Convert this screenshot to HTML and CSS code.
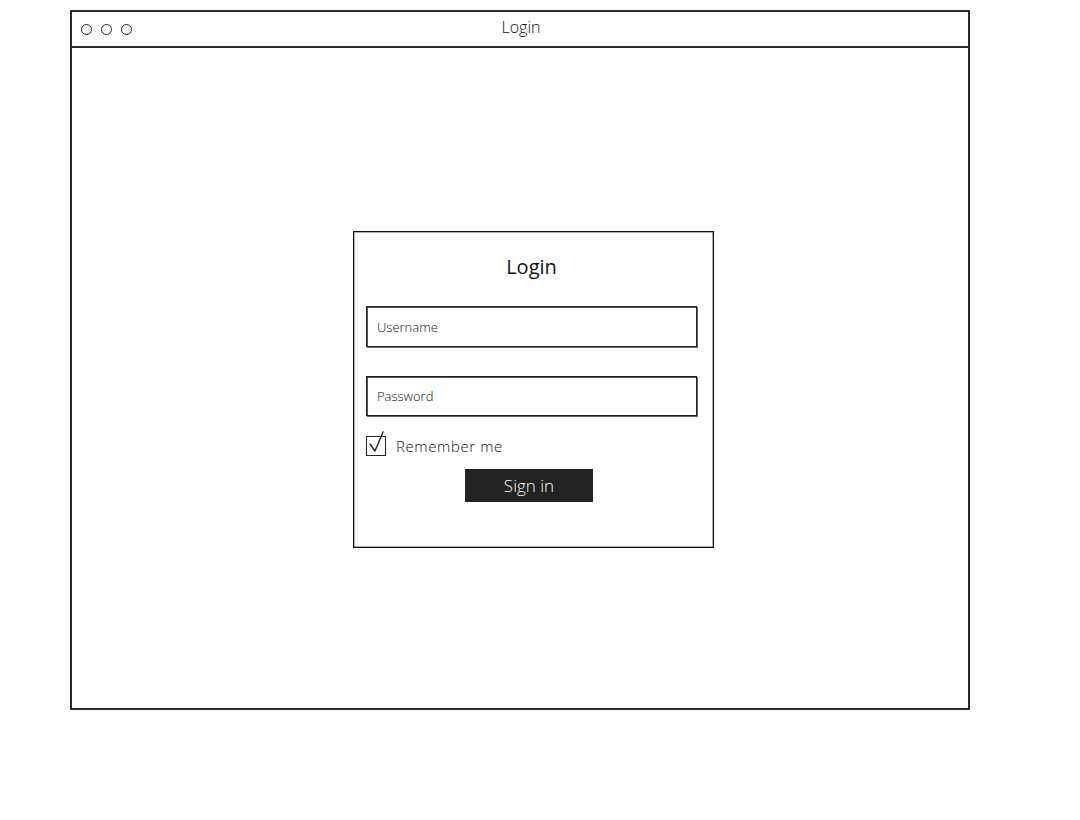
FILE: index.html
```html
<!DOCTYPE html>
<html>
<head>
<meta charset="utf-8">
<link rel="stylesheet" href="styles.css">
</head>
<body>
<div class="window">
  <div class="titlebar">
    <div class="dots"><span class="dot"></span><span class="dot"></span><span class="dot"></span></div>
    <div class="wtitle">Login</div>
  </div>
  <div class="content">
    <div class="card">
      <div class="ctitle">Login</div>
      <div class="field f1">Username</div>
      <div class="field f2">Password</div>
      <div class="remember">
        <span class="check"><svg width="22" height="24" viewBox="0 0 22 24"><path d="M4 13 L9 20 L17 1" fill="none" stroke="#222" stroke-width="1.4" stroke-linecap="round" stroke-linejoin="round"/></svg></span>
        <span class="rlabel">Remember me</span>
      </div>
      <div class="btn">Sign in</div>
    </div>
  </div>
</div>
</body>
</html>
```
FILE: styles.css
```css
html, body { margin: 0; padding: 0; background: #fff; }
body {
  padding: 10px 0 0 70px;
  font-family: "Open Sans", "Noto Sans", sans-serif;
  color: #111;
}
.window {
  width: 900px;
  height: 700px;
  box-sizing: border-box;
  border: 2px solid #2a2a2a;
  display: flex;
  flex-direction: column;
}
.titlebar {
  height: 36px;
  box-sizing: border-box;
  border-bottom: 2px solid #2a2a2a;
  display: flex;
  align-items: center;
  position: relative;
}
.dots { display: flex; gap: 9px; padding-left: 9px; }
.dot {
  width: 9px; height: 9px;
  border: 1.4px solid #222;
  border-radius: 50%;
}
.wtitle {
  position: absolute;
  left: 0; right: 0;
  top: 4px;
  text-align: center;
  font-size: 16px;
  line-height: 22px;
  font-weight: 300;
  padding-left: 2px;
}
.content {
  flex: 1;
  padding: 183px 0 0 281px;
}
.card {
  width: 361px;
  height: 317px;
  box-sizing: border-box;
  border: 1px solid #111;
  box-shadow: inset 0 0 0 0.5px #666;
  padding: 22px 16px 0 12px;
}
.ctitle {
  text-align: center;
  font-size: 20px;
  line-height: 26px;
  font-weight: 400;
}
.field {
  height: 41px;
  box-sizing: border-box;
  border: 1px solid #222;
  box-shadow: inset 1px 1px 0 #555, 1px 1px 0 #666;
  font-size: 13px;
  font-weight: 300;
  display: flex;
  align-items: center;
  padding-left: 10px;
}
.f1 { margin-top: 26px; }
.f2 { margin-top: 29px; height: 40px; }
.remember {
  margin-top: 20px;
  display: flex;
  align-items: center;
  height: 20px;
}
.check {
  width: 20px; height: 20px;
  box-sizing: border-box;
  border: 1.5px solid #222;
  position: relative;
}
.check svg { position: absolute; left: -1px; top: -6px; }
.rlabel {
  margin-left: 10px;
  font-size: 15px;
  font-weight: 300;
  letter-spacing: 0.6px;
}
.btn {
  margin: 13px 0 0 99px;
  width: 128px;
  height: 33px;
  background: #222;
  color: #fff;
  font-size: 17px;
  font-weight: 300;
  display: flex;
  align-items: center;
  justify-content: center;
}
```
